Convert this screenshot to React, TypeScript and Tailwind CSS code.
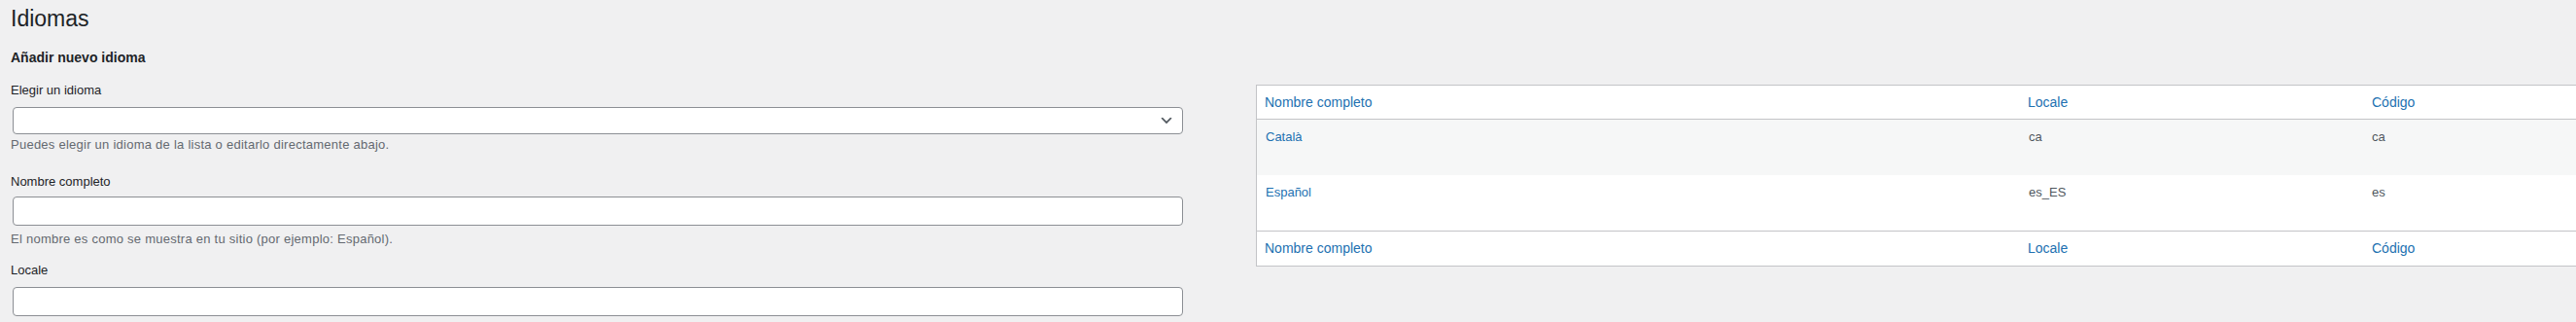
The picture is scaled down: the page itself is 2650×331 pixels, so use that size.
import type { ReactNode } from 'react';

const FONT = "font-['Liberation_Sans',Arial,sans-serif]";

interface Language {
  name: string;
  locale: string;
  code: string;
}

const languages: Language[] = [
  { name: 'Català', locale: 'ca', code: 'ca' },
  { name: 'Español', locale: 'es_ES', code: 'es' },
];

function Chevron() {
  return (
    <svg viewBox="0 0 20 20" className="w-4 h-4 fill-[#50575e]" aria-hidden="true">
      <path d="M5 6l5 5 5-5 2 1-7 7-7-7 2-1z" />
    </svg>
  );
}

function Label({ children, className = '' }: { children: ReactNode; className?: string }) {
  return <label className={`block text-[13px] leading-[19.5px] text-[#1d2327] ${className}`}>{children}</label>;
}

function Description({ children, className = '' }: { children: ReactNode; className?: string }) {
  return <p className={`text-[13px] leading-[19.5px] tracking-[0.25px] text-[#646970] ${className}`}>{children}</p>;
}

function TextInput({ className = '' }: { className?: string }) {
  return (
    <input
      type="text"
      className={`block ml-[2px] w-[1204px] h-[30px] bg-white border border-[#8c8f94] rounded-[4px] px-2 text-[14px] ${className}`}
    />
  );
}

function HeaderRow({ className = '' }: { className?: string }) {
  return (
    <div className={`grid grid-cols-[785px_354px_1fr] items-center text-[14px] text-[#2271b1] ${className}`}>
      <div className="pl-2">Nombre completo</div>
      <div className="pl-2">Locale</div>
      <div className="pl-2">Código</div>
    </div>
  );
}

export default function App() {
  return (
    <div className={`h-[331px] overflow-hidden bg-[#f0f0f1] pl-[11px] ${FONT}`}>
      <h1 className="pt-1 text-[23px] leading-[30px] font-normal text-[#1d2327]">Idiomas</h1>

      <div className="flex">
        {/* Left column: form */}
        <div className="w-[1206px] shrink-0">
          <h2 className="mt-4 text-[14px] leading-[19px] font-bold text-[#1d2327]">Añadir nuevo idioma</h2>

          <Label className="mt-[14px]">Elegir un idioma</Label>
          <div className="relative ml-[2px] w-[1204px] h-[28px] mt-[7.5px] bg-white border border-[#8c8f94] rounded-[4px]">
            <div className="absolute right-2 top-1/2 -translate-y-1/2">
              <Chevron />
            </div>
          </div>
          <Description className="mt-px">Puedes elegir un idioma de la lista o editarlo directamente abajo.</Description>

          <Label className="mt-[18.5px]">Nombre completo</Label>
          <TextInput className="mt-[5.5px]" />
          <Description className="mt-1">El nombre es como se muestra en tu sitio (por ejemplo: Español).</Description>

          <Label className="mt-[12.5px]">Locale</Label>
          <TextInput className="mt-[7.5px]" />
        </div>

        {/* Right column: language list */}
        <div className="ml-[75px] flex-1 mt-[53px]">
          <div className="border-y border-l border-[#c3c4c7] bg-white">
            <HeaderRow className="h-[35px] border-b border-[#c3c4c7]" />
            {languages.map((lang, i) => (
              <div
                key={lang.locale}
                className={`grid grid-cols-[785px_354px_1fr] h-[57px] pt-2 text-[13px] leading-[19.5px] ${
                  i % 2 === 0 ? 'bg-[#f6f7f7]' : 'bg-white'
                }`}
              >
                <div className="pl-[9px] text-[#2271b1]">{lang.name}</div>
                <div className="pl-[9px] text-[#50575e]">{lang.locale}</div>
                <div className="pl-2 text-[#50575e]">{lang.code}</div>
              </div>
            ))}
            <HeaderRow className="h-[36px] border-t border-[#c3c4c7]" />
          </div>
        </div>
      </div>
    </div>
  );
}
